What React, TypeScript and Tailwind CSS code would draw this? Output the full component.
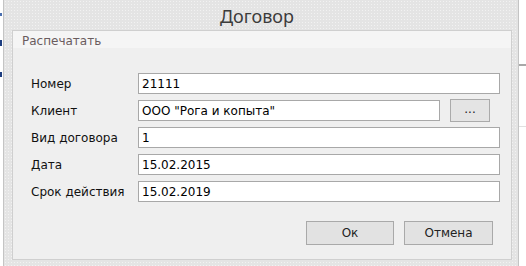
import React from "react";

const font = { fontFamily: '"DejaVu Sans", Verdana, sans-serif' };

function Row({ label, value, extra }: { label: string; value: string; extra?: boolean }) {
  return (
    <div className="flex items-center h-[21px]">
      <div className="w-[107px] text-[12px] text-[#111] leading-none">{label}</div>
      {extra ? (
        <div className="flex flex-1 items-center">
          <div className="w-[302px] h-[21px] bg-white border border-[#a8a8a8] flex items-center pl-[3px] text-[12px] text-black leading-none">
            {value}
          </div>
          <button className="ml-[10px] w-[40px] h-[23px] bg-[#e4e4e4] border border-[#aaaaaa] flex items-center justify-center text-[12px] text-[#222] leading-none pb-[4px]">
            ...
          </button>
        </div>
      ) : (
        <div className="w-[362px] h-[21px] bg-white border border-[#a8a8a8] flex items-center pl-[3px] text-[12px] text-black leading-none">
          {value}
        </div>
      )}
    </div>
  );
}

export default function App() {
  return (
    <div className="w-[526px] h-[266px] bg-white flex overflow-hidden" style={font}>
      {/* left background strip */}
      <div className="w-[3px] h-full flex flex-col bg-white">
        <div className="h-[13px]" />
        <div className="w-[2px] h-[3px] bg-[#4a6fb0]" />
        <div className="h-[24px]" />
        <div className="w-[2px] h-[6px] bg-[#1d3d80]" />
        <div className="h-[26px]" />
        <div className="w-[2px] h-[5px] bg-[#1d3d80]" />
      </div>
      {/* dialog frame */}
      <div className="w-[516px] h-full bg-[#e4e4e4] bg-[radial-gradient(#f2f2f2_0.6px,transparent_0.8px)] bg-[length:3px_3px] border-l border-r border-[#c4c4c4] flex flex-col pl-[8px] pr-[6px]">
        <div className="h-[30px] flex items-center justify-center pr-[10px] pt-[2px]">
          <span className="text-[18px] text-[#3c3c3c] leading-none" style={{ fontFamily: '"Noto Sans", "Open Sans", sans-serif' }}>
            Договор
          </span>
        </div>
        <div className="h-[230px] border border-[#cfcfcf] bg-[#efefef] flex flex-col">
          <div className="h-[17px] bg-[#f5f5f5] flex items-center pl-[9px]">
            <span className="text-[12px] text-[#6a5c5e] leading-none pt-[2px]">Распечатать</span>
          </div>
          <div className="flex flex-col gap-[6px] pl-[18px] pt-[25px]">
            <Row label="Номер" value="21111" />
            <Row label="Клиент" value={'ООО "Рога и копыта"'} extra />
            <Row label="Вид договора" value="1" />
            <Row label="Дата" value="15.02.2015" />
            <Row label="Срок действия" value="15.02.2019" />
          </div>
          <div className="flex justify-end gap-[10px] pr-[18px] pt-[19px]">
            <button className="w-[88px] h-[24px] bg-[#e2e2e2] border border-[#a9a9a9] text-[12px] text-[#222] leading-none">
              Ок
            </button>
            <button className="w-[89px] h-[24px] bg-[#e2e2e2] border border-[#a9a9a9] text-[12px] text-[#222] leading-none">
              Отмена
            </button>
          </div>
        </div>
      </div>
      {/* right background strip */}
      <div className="flex-1 h-full bg-white flex flex-col">
        <div className="h-[64px]" />
        <div className="h-[2px] bg-[#a8a8a8]" />
        <div className="h-[60px]" />
        <div className="h-[1px] bg-[#e0e0e0]" />
      </div>
    </div>
  );
}
